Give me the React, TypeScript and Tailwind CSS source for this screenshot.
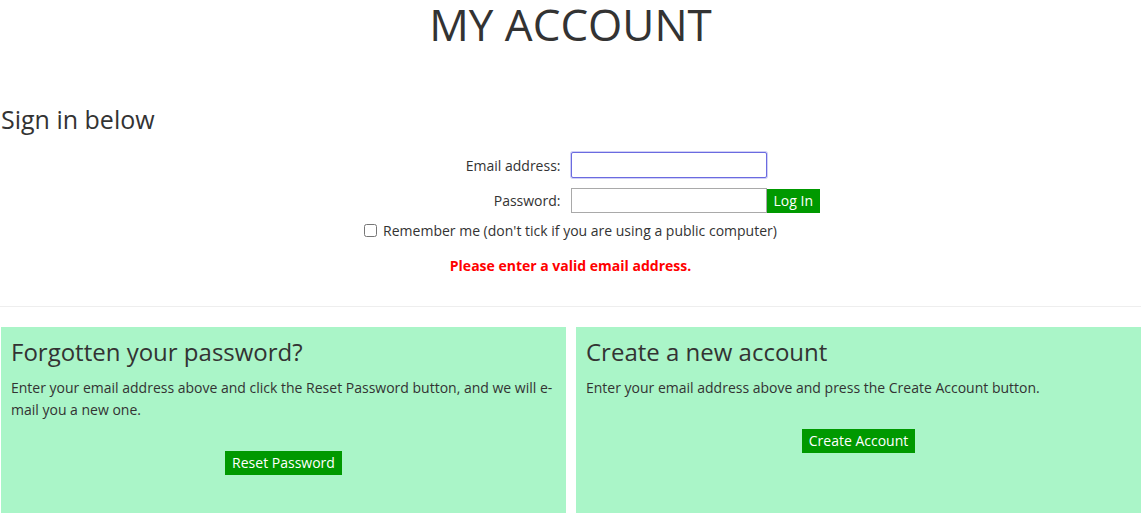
import React from 'react';

const font = { fontFamily: '"Open Sans", "Noto Sans", sans-serif' };

function Panel({ title, text, button }: { title: string; text: string; button: string }) {
  return (
    <div className="bg-[#aaf5c8] px-[10px] pt-[8px] pb-[60px]">
      <h2 className="text-[24px] leading-[34px] text-[#333]">{title}</h2>
      <p className="mt-[8px] text-[14px] leading-[22px] text-[#333]">{text}</p>
      <div className="mt-[30px] flex justify-center">
        <button className="bg-[#009900] px-[7px] h-[24px] text-[14px] leading-[24px] text-white">{button}</button>
      </div>
    </div>
  );
}

export default function App() {
  return (
    <div className="min-h-[513px] bg-white text-[#333] overflow-hidden" style={font}>
      <h1 className="text-center text-[44px] leading-[48px] text-[#333]">MY ACCOUNT</h1>

      <h3 className="mt-[54px] pl-px text-[25px] leading-[34px]">Sign in below</h3>

      <form className="mt-[16px]" onSubmit={(e) => e.preventDefault()}>
        <div className="grid grid-cols-2 items-center">
          <label className="pr-[10px] text-right text-[14px]">Email address:</label>
          <div>
            <input
              type="email"
              className="block h-[26px] w-[196px] rounded-[2px] border border-[#6b6be0] bg-white px-1 outline-none shadow-[0_0_0_1px_rgba(120,120,230,0.35)]"
            />
          </div>
        </div>
        <div className="mt-[10px] grid grid-cols-2 items-center">
          <label className="pr-[10px] text-right text-[14px]">Password:</label>
          <div className="flex items-center">
            <input
              type="password"
              className="block h-[25px] w-[196px] border border-[#a9a9a9] bg-white px-1 outline-none"
            />
            <button className="h-[24px] bg-[#009900] px-[7px] text-[14px] leading-[24px] text-white">Log In</button>
          </div>
        </div>
        <div className="mt-[7px] flex items-center justify-center gap-[6px] text-[14px]">
          <input type="checkbox" className="h-[13px] w-[13px]" />
          <span>Remember me (don't tick if you are using a public computer)</span>
        </div>
        <p className="mt-[14px] text-center text-[14px] font-bold text-[#ff0000]">
          Please enter a valid email address.
        </p>
      </form>

      <hr className="mt-[30px] border-t border-[#eeeeee]" />

      <div className="mt-[20px] grid grid-cols-2 gap-[10px] pl-px">
        <Panel
          title="Forgotten your password?"
          text="Enter your email address above and click the Reset Password button, and we will e-mail you a new one."
          button="Reset Password"
        />
        <Panel
          title="Create a new account"
          text="Enter your email address above and press the Create Account button."
          button="Create Account"
        />
      </div>
    </div>
  );
}
